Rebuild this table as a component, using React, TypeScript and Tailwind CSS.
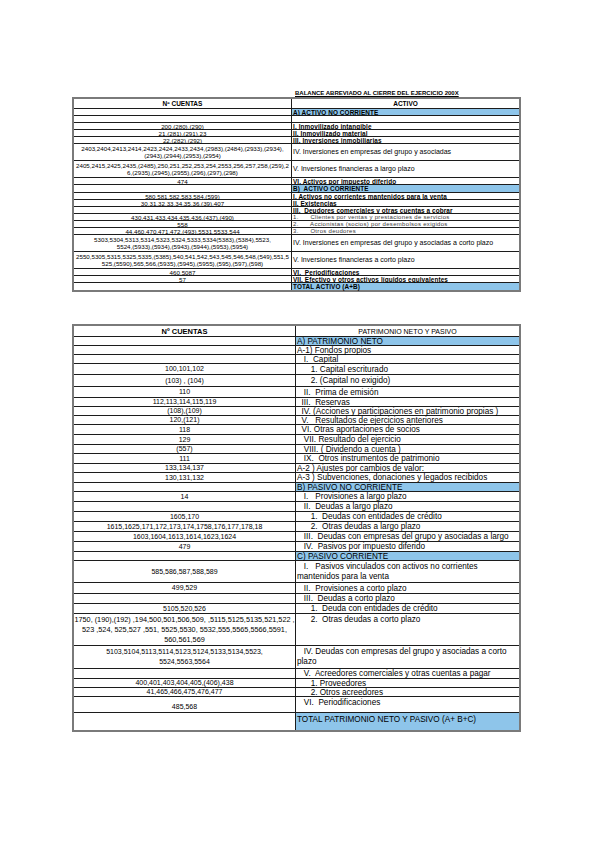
import React from "react";

type RowProps = {
  h: string;
  lw: string;
  left?: React.ReactNode;
  right?: React.ReactNode;
  lc?: string;
  rc?: string;
  blue?: boolean;
};

function Row({ h, lw, left, right, lc = "", rc = "", blue = false }: RowProps) {
  return (
    <div className={`flex ${h} border-t border-[#1c1c1c] first:border-t-0`}>
      <div
        className={`${lw} shrink-0 border-r border-[#1c1c1c] flex items-center justify-center text-center overflow-visible ${lc}`}
      >
        {left}
      </div>
      <div className={`flex-1 min-w-0 flex ${blue ? "bg-[#8ec5ea]" : "bg-white"} ${rc}`}>{right}</div>
    </div>
  );
}

const TW = "w-[218px]";
const BW = "w-[222px]";

const tl = "text-[6.2px] leading-[7px] whitespace-nowrap";
const trb = "items-center pl-[1px] text-[6.4px] leading-[7px] font-bold whitespace-pre tracking-[0.1px]";
const trr = "items-center pl-[1px] text-[7px] leading-[8px] whitespace-pre";
const trs = "items-center pl-[1px] text-[6px] leading-[7px] whitespace-pre tracking-[0.3px] text-[#3a3a3a]";

const bl = "text-[7px] leading-[10px] whitespace-nowrap";
const br = "items-center pl-[1px] text-[8.2px] leading-[9px] whitespace-pre";

function TopTable() {
  return (
    <div className="w-[449px]">
      <div className="h-[9px] flex items-center pl-[223px]">
        <span className="text-[6px] leading-[6px] font-bold underline whitespace-nowrap">
          BALANCE ABREVIADO AL CIERRE DEL EJERCICIO 200X
        </span>
      </div>
      <div className="border-2 border-[#7a7a7a]">
        <Row h="h-[9px]" lw={TW} lc="text-[6.5px] leading-[7px] font-bold" left="Nº CUENTAS" rc="items-center justify-center text-[6.5px] leading-[7px] font-bold" right="ACTIVO" />
        <Row h="h-[7px]" lw={TW} blue rc={trb} right="A) ACTIVO NO CORRIENTE" />
        <Row h="h-[7px]" lw={TW} />
        <Row h="h-[7px]" lw={TW} lc={tl} left="200,(280),(290)" rc={trb} right="I. Inmovilizado intangible" />
        <Row h="h-[7px]" lw={TW} lc={tl} left="21,(281),(291),23" rc={trb} right="II. Inmovilizado material" />
        <Row h="h-[7px]" lw={TW} lc={tl} left="22,(282),(292)" rc={trb} right="III. Inversiones inmobiliarias" />
        <Row
          h="h-[17px]"
          lw={TW}
          lc={tl}
          left={
            <span>
              2403,2404,2413,2414,2423,2424,2433,2434,(2983),(2484),(2933),(2934),
              <br />
              (2943),(2944),(2953),(2954)
            </span>
          }
          rc={trr}
          right="IV. Inversiones en empresas del grupo y asociadas"
        />
        <Row
          h="h-[17px]"
          lw={TW}
          lc={tl}
          left={
            <span>
              2405,2415,2425,2435,(2485),250,251,252,253,254,2553,256,257,258,(259),2
              <br />
              6,(2935),(2945),(2955),(296),(297),(298)
            </span>
          }
          rc={trr}
          right="V. Inversiones financieras a largo plazo"
        />
        <Row h="h-[7px]" lw={TW} lc={tl} left="474" rc={trb} right="VI. Activos por impuesto diferido" />
        <Row h="h-[8px]" lw={TW} blue rc={trb} right="B)  ACTIVO CORRIENTE" />
        <Row h="h-[7px]" lw={TW} lc={tl} left="580,581,582,583,584,(599)" rc={trb} right="I. Activos no corrientes mantenidos para la venta" />
        <Row h="h-[7px]" lw={TW} lc={tl} left="30,31,32,33,34,35,36,(39),407" rc={trb} right="II. Existencias" />
        <Row h="h-[7px]" lw={TW} rc={trb} right="III.  Deudores comerciales y otras cuentas a cobrar" />
        <Row h="h-[7px]" lw={TW} lc={tl} left="430,431,433,434,435,436,(437),(490)" rc={trs} right="1.      Clientes por ventas y prestaciones de servicios" />
        <Row h="h-[7px]" lw={TW} lc={tl} left="558" rc={trs} right="2.      Accionistas (socios) por desembolsos exigidos" />
        <Row h="h-[7px]" lw={TW} lc={tl} left="44,460,470,471,472,(493),5531,5533,544" rc={trs} right="3.      Otros deudores" />
        <Row
          h="h-[17px]"
          lw={TW}
          lc={tl}
          left={
            <span>
              5303,5304,5313,5314,5323,5324,5333,5334(5383),(5384),5523,
              <br />
              5524,(5933),(5934),(5943),(5944),(5953),(5954)
            </span>
          }
          rc={trr}
          right="IV. Inversiones en empresas del grupo y asociadas a corto plazo"
        />
        <Row
          h="h-[17px]"
          lw={TW}
          lc={tl}
          left={
            <span>
              2550,5305,5315,5325,5335,(5385),540,541,542,543,545,546,548,(549),551,5
              <br />
              525,(5590),565,566,(5935),(5945),(5955),(595),(597),(598)
            </span>
          }
          rc={trr}
          right="V. Inversiones financieras a corto plazo"
        />
        <Row h="h-[7px]" lw={TW} lc={tl} left="460,5087" rc={trb} right="VI.  Periodificaciones" />
        <Row h="h-[7px]" lw={TW} lc={tl} left="57" rc={trb} right="VII. Efectivo y otros activos líquidos equivalentes" />
        <Row h="h-[8px]" lw={TW} blue rc={trb} right="TOTAL ACTIVO (A+B)" />
      </div>
    </div>
  );
}

function BottomTable() {
  return (
    <div className="w-[449px] border-2 border-[#7a7a7a]">
      <Row h="h-[10px]" lw={BW} lc="text-[7.5px] leading-[9px] font-bold" left="Nº CUENTAS" rc="items-center justify-center text-[7px] leading-[9px]" right="PATRIMONIO NETO Y PASIVO" />
      <Row h="h-[9px]" lw={BW} blue rc={br} right="A) PATRIMONIO NETO" />
      <Row h="h-[9px]" lw={BW} rc={br} right="A-1) Fondos propios" />
      <Row h="h-[9px]" lw={BW} rc={br} right="   I.  Capital" />
      <Row h="h-[11px]" lw={BW} lc={bl} left="100,101,102" rc={br} right="      1. Capital escriturado" />
      <Row h="h-[12px]" lw={BW} lc={bl} left="(103) , (104)" rc={br} right="      2. (Capital no exigido)" />
      <Row h="h-[11px]" lw={BW} lc={bl} left="110" rc={br} right="   II.  Prima de emisión" />
      <Row h="h-[9px]" lw={BW} lc={bl} left="112,113,114,115,119" rc={br} right="  III.  Reservas" />
      <Row h="h-[9px]" lw={BW} lc={bl} left="(108),(109)" rc={br} right="  IV. (Acciones y participaciones en patrimonio propias )" />
      <Row h="h-[9px]" lw={BW} lc={bl} left="120,(121)" rc={br} right="  V.   Resultados de ejercicios anteriores" />
      <Row h="h-[10px]" lw={BW} lc={bl} left="118" rc={br} right="  VI. Otras aportaciones de socios" />
      <Row h="h-[10px]" lw={BW} lc={bl} left="129" rc={br} right="   VII. Resultado del ejercicio" />
      <Row h="h-[9px]" lw={BW} lc={bl} left="(557)" rc={br} right="   VIII. ( Dividendo a cuenta )" />
      <Row h="h-[10px]" lw={BW} lc={bl} left="111" rc={br} right="   IX.  Otros instrumentos de patrimonio" />
      <Row h="h-[9px]" lw={BW} lc={bl} left="133,134,137" rc={br} right="A-2 ) Ajustes por cambios de valor:" />
      <Row h="h-[10px]" lw={BW} lc={bl} left="130,131,132" rc={br} right="A-3 ) Subvenciones, donaciones y legados recibidos" />
      <Row h="h-[9px]" lw={BW} blue rc={br} right="B) PASIVO NO CORRIENTE" />
      <Row h="h-[10px]" lw={BW} lc={bl} left="14" rc={br} right="   I.   Provisiones a largo plazo" />
      <Row h="h-[10px]" lw={BW} rc={br} right="   II.  Deudas a largo plazo" />
      <Row h="h-[10px]" lw={BW} lc={bl} left="1605,170" rc={br} right="      1.  Deudas con entidades de crédito" />
      <Row h="h-[10px]" lw={BW} lc={bl} left="1615,1625,171,172,173,174,1758,176,177,178,18" rc={br} right="      2.  Otras deudas a largo plazo" />
      <Row h="h-[10px]" lw={BW} lc={bl} left="1603,1604,1613,1614,1623,1624" rc={br} right="   III.  Deudas con empresas del grupo y asociadas a largo" />
      <Row h="h-[10px]" lw={BW} lc={bl} left="479" rc={br} right="   IV.  Pasivos por impuesto diferido" />
      <Row h="h-[9px]" lw={BW} blue rc={br} right="C) PASIVO CORRIENTE" />
      <Row
        h="h-[22px]"
        lw={BW}
        lc={bl}
        left="585,586,587,588,589"
        rc="items-center pl-[1px] text-[8.2px] leading-[10px]"
        right={
          <span className="whitespace-pre">
            {"   I.   Pasivos vinculados con activos no corrientes"}
            <br />
            {"mantenidos para la venta"}
          </span>
        }
      />
      <Row h="h-[11px]" lw={BW} lc={bl} left="499,529" rc={br} right="   II.  Provisiones a corto plazo" />
      <Row h="h-[10px]" lw={BW} rc={br} right="   III.  Deudas a corto plazo" />
      <Row h="h-[10px]" lw={BW} lc={bl} left="5105,520,526" rc={br} right="      1.  Deuda con entidades de crédito" />
      <Row
        h="h-[32px]"
        lw={BW}
        lc="text-[7.3px] leading-[10px] whitespace-nowrap"
        left={
          <span>
            1750, (190),(192) ,194,500,501,506,509, ,5115,5125,5135,521,522 ,
            <br />
            523 ,524, 525,527 ,551, 5525,5530, 5532,555,5565,5566,5591,
            <br />
            560,561,569
          </span>
        }
        rc="items-start pt-[1px] pl-[1px] text-[8.2px] leading-[9px] whitespace-pre"
        right="      2.  Otras deudas a corto plazo"
      />
      <Row
        h="h-[23px]"
        lw={BW}
        lc={bl}
        left={
          <span>
            5103,5104,5113,5114,5123,5124,5133,5134,5523,
            <br />
            5524,5563,5564
          </span>
        }
        rc="items-center pl-[1px] text-[8.2px] leading-[10px]"
        right={
          <span className="whitespace-pre">
            {"   IV. Deudas con empresas del grupo y asociadas a corto"}
            <br />
            {"plazo"}
          </span>
        }
      />
      <Row h="h-[10px]" lw={BW} rc={br} right="   V.  Acreedores comerciales y otras cuentas a pagar" />
      <Row h="h-[9px]" lw={BW} lc="text-[7px] leading-[8px] whitespace-nowrap" left="400,401,403,404,405,(406),438" rc={br} right="      1. Proveedores" />
      <Row h="h-[9px]" lw={BW} lc="text-[7px] leading-[8px] whitespace-nowrap" left="41,465,466,475,476,477" rc={br} right="      2. Otros acreedores" />
      <Row
        h="h-[16px]"
        lw={BW}
        lc="text-[7px] leading-[10px] whitespace-nowrap pt-[4px]"
        left="485,568"
        rc="items-start pt-[1px] pl-[1px] text-[8.2px] leading-[9px] whitespace-pre"
        right="   VI.  Periodificaciones"
      />
      <Row
        h="h-[18px]"
        lw={BW}
        blue
        rc="items-start pt-[2px] pl-[1px] text-[8.2px] leading-[9px] whitespace-pre"
        right="TOTAL PATRIMONIO NETO Y PASIVO (A+ B+C)"
      />
    </div>
  );
}

export default function App() {
  return (
    <div className="w-[599px] h-[848px] bg-white text-black font-['Liberation_Sans',Arial,sans-serif] overflow-hidden">
      <div className="pt-[88px] pl-[72px]">
        <TopTable />
        <div className="h-[32px]" />
        <BottomTable />
      </div>
    </div>
  );
}
